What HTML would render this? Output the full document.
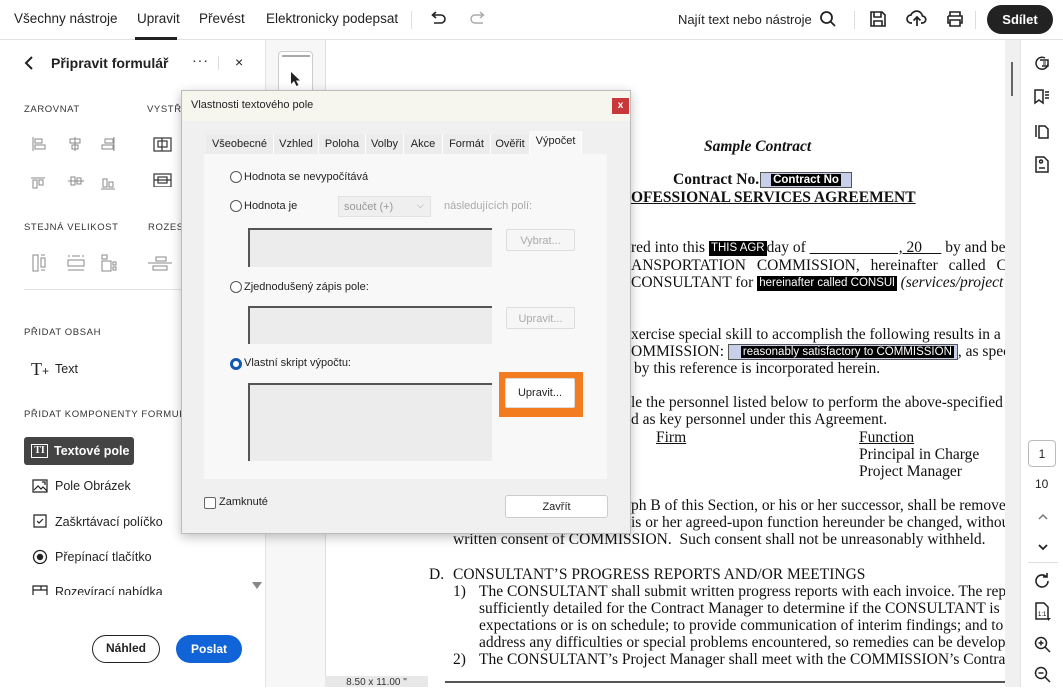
<!DOCTYPE html>
<html><head><meta charset="utf-8">
<style>
*{box-sizing:border-box;margin:0;padding:0}
body{width:1063px;height:687px;overflow:hidden;background:#fff;font-family:"Liberation Sans",sans-serif;position:relative;color:#222}
.a{position:absolute}
.top{left:0;top:0;width:1063px;height:40px;border-bottom:1px solid #e1e1e1;background:#fff}
.nav{font-size:13.5px;color:#222;top:11px}
.lbl{font-size:9.5px;letter-spacing:.6px;color:#333}
.ic{stroke:#888;fill:none;stroke-width:1}
.doc{font-family:"Liberation Serif",serif;font-size:15.5px;color:#111;white-space:nowrap;line-height:17px}
.fld{background:#000;color:#fff;font-family:"Liberation Sans",sans-serif;font-size:11.5px;padding:0 2px;display:inline-block;line-height:15px;vertical-align:1px}
.fldb{background:#c8cfe8;border:1px solid #555;display:inline-block;line-height:14px;font-family:"Liberation Sans",sans-serif;font-size:11.5px;vertical-align:1px}
.dlg{font-family:"Liberation Sans",sans-serif;font-size:11px;color:#222}
.tab{top:43px;height:20px;font-size:11px;padding-top:4px;text-align:center;background:#ececec;border-right:1px solid #fff}
.rad{width:12px;height:12px;border:1px solid #555;border-radius:50%;background:#fff}
.ta{background:#ececec;border-top:2px solid #555;border-left:2px solid #555}
.btn{background:#f6f6f6;border:1px solid #ddd;border-radius:2px;text-align:center;color:#aaa;font-size:11px;padding-top:5px}
</style></head><body>

<div class="a top"></div>
<div class="a nav" style="left:14px">Všechny nástroje</div>
<div class="a nav" style="left:137px">Upravit</div>
<div class="a" style="left:135px;top:37px;width:42px;height:3px;background:#222"></div>
<div class="a nav" style="left:199px">Převést</div>
<div class="a nav" style="left:266px">Elektronicky podepsat</div>
<div class="a" style="left:411px;top:11px;width:1px;height:18px;background:#ddd"></div>
<svg class="a" style="left:428px;top:10px" width="20" height="18"><path d="M5 5h8a4 4 0 0 1 0 8H6M8 2L4.5 5 8 8" stroke="#222" stroke-width="1.6" fill="none"/></svg>
<svg class="a" style="left:468px;top:10px" width="20" height="18"><path d="M15 5H7a4 4 0 0 0 0 8h8M12 2l3.5 3L12 8" stroke="#aaa" stroke-width="1.4" fill="none"/></svg>
<div class="a nav" style="left:678px;font-size:13px;top:12px">Najít text nebo nástroje</div>
<svg class="a" style="left:819px;top:10px" width="18" height="18"><circle cx="7.5" cy="7.5" r="5.5" stroke="#222" stroke-width="1.8" fill="none"/><path d="M11.5 11.5L16 16" stroke="#222" stroke-width="1.8"/></svg>
<div class="a" style="left:854px;top:11px;width:1px;height:18px;background:#ddd"></div>
<svg class="a" style="left:869px;top:10px" width="18" height="18"><path d="M2 2h11l3 3v11H2z M5 2v5h7V2 M5 16v-5h8v5" stroke="#222" stroke-width="1.6" fill="none"/></svg>
<svg class="a" style="left:906px;top:8px" width="22" height="20"><path d="M6 15H5a4 4 0 0 1 0-8 6 6 0 0 1 11.5 1A3.5 3.5 0 0 1 16 15h-1M11 18V9M7.5 12.5L11 9l3.5 3.5" stroke="#222" stroke-width="1.7" fill="none"/></svg>
<svg class="a" style="left:945px;top:10px" width="20" height="18"><path d="M5 6V2h10v4M3 6h14v7h-2M5 13H3V6M5 10h10v6H5z" stroke="#222" stroke-width="1.6" fill="none"/></svg>
<div class="a" style="left:975px;top:11px;width:1px;height:18px;background:#ddd"></div>
<div class="a" style="left:987px;top:5px;width:66px;height:29px;background:#222;border-radius:15px;color:#fff;font-weight:bold;font-size:13px;text-align:center;line-height:29px">Sdílet</div>

<div class="a" style="left:265px;top:40px;width:1px;height:647px;background:#e3e3e3"></div>
<svg class="a" style="left:22px;top:55px" width="14" height="16"><path d="M10 2L4 8l6 6" stroke="#222" stroke-width="2" fill="none"/></svg>
<div class="a" style="left:51px;top:55px;font-size:14px;font-weight:bold;color:#222">Připravit formulář</div>
<div class="a" style="left:192px;top:52px;font-size:14px;letter-spacing:1px">···</div>
<div class="a" style="left:218px;top:56px;width:1px;height:14px;background:#ddd"></div>
<div class="a" style="left:235px;top:54px;font-size:14px">×</div>
<div class="a lbl" style="left:24px;top:104px">ZAROVNAT</div>
<div class="a lbl" style="left:147px;top:104px">VYSTŘE</div>
<svg class="a" style="left:28px;top:135px" width="100" height="60"><g class="ic">
<path d="M5 2v14M7 4h7v4H7zM7 10h10v4H7z"/><path d="M47 2v14M42 4h10v4H42zM44 10h6v4h-6z"/><path d="M86 2v14M77 4h8v4h-8zM74 10h11v4H74z"/>
<path d="M3 43h14M5 45h4v8H5zM11 45h4v5h-4z"/><path d="M40 46h16M43 42h4v8h-4zM49 43h4v6h-4z"/><path d="M73 54h14M75 44h4v8h-4zM81 47h4v5h-4z"/></g></svg>
<svg class="a" style="left:153px;top:137px" width="22" height="50"><g stroke="#333" fill="none" stroke-width="1.2"><rect x="1" y="1" width="17" height="13"/><rect x="5" y="4" width="9" height="6"/><path d="M9 1v13"/><rect x="1" y="37" width="17" height="13"/><rect x="5" y="40" width="9" height="6"/><path d="M1 43h17"/></g></svg>
<div class="a lbl" style="left:24px;top:222px">STEJNÁ VELIKOST</div>
<div class="a lbl" style="left:148px;top:222px">ROZESI</div>
<svg class="a" style="left:30px;top:253px" width="150" height="22"><g class="ic"><path d="M3 2h5v16H3zM11 5h4v9h-4zM11 17h4M11 2h4"/><path d="M38 7h16v6H38zM42 3h8M38 17h16M38 3h2M52 3h2"/><path d="M72 2h5v4h-5zM72 8h9v10h-9zM83 9h3v3h-3zM83 14h3v3h-3z"/><path d="M126 4h10v4h-10zM123 13h14v4h-14zM118 10h24"/></g></svg>
<div class="a" style="left:24px;top:289px;width:240px;height:1px;background:#e3e3e3"></div>
<div class="a lbl" style="left:24px;top:327px">PŘIDAT OBSAH</div>
<div class="a" style="left:31px;top:359px;font-family:'Liberation Serif',serif;font-size:18px">T<span style="font-size:12px;font-family:'Liberation Sans'">+</span></div>
<div class="a" style="left:55px;top:362px;font-size:12.5px">Text</div>
<div class="a lbl" style="left:24px;top:409px">PŘIDAT KOMPONENTY FORMULÁ</div>
<div class="a" style="left:24px;top:437px;width:110px;height:28px;background:#444;border-radius:3px"></div>
<div class="a" style="left:31px;top:444px;width:17px;height:14px;border:1.5px solid #fff;color:#fff;font-size:10px;font-weight:bold;text-align:center;line-height:11px;font-family:'Liberation Serif',serif">TI</div>
<div class="a" style="left:54px;top:444px;color:#fff;font-weight:bold;font-size:12.5px">Textové pole</div>
<svg class="a" style="left:32px;top:479px" width="16" height="14"><path d="M1 1h14v12H1zM2 11l4-4 3 3 2-2 4 4M10 3h3v3" stroke="#222" fill="none" stroke-width="1.2"/></svg>
<div class="a" style="left:55px;top:479px;font-size:12.5px">Pole Obrázek</div>
<svg class="a" style="left:33px;top:514px" width="14" height="14"><path d="M1 1h12v12H1zM4 7l2 2 4-4" stroke="#222" fill="none" stroke-width="1.2"/></svg>
<div class="a" style="left:55px;top:515px;font-size:12.5px">Zaškrtávací políčko</div>
<svg class="a" style="left:32px;top:549px" width="16" height="16"><circle cx="8" cy="8" r="6.5" stroke="#222" fill="none" stroke-width="1.3"/><circle cx="8" cy="8" r="3.2" fill="#222"/></svg>
<div class="a" style="left:55px;top:550px;font-size:12.5px">Přepínací tlačítko</div>
<div class="a" style="left:30px;top:583px;width:230px;height:12px;overflow:hidden"><svg class="a" style="left:2px;top:2px" width="16" height="12"><path d="M1 1h14v10H1zM1 5h14M9 1v4" stroke="#222" fill="none" stroke-width="1.2"/></svg><div class="a" style="left:25px;top:2px;font-size:12.5px">Rozevírací nabídka</div></div>
<div class="a" style="left:252px;top:582px;width:0;height:0;border-left:5px solid transparent;border-right:5px solid transparent;border-top:7px solid #888"></div>
<div class="a" style="left:92px;top:635px;width:68px;height:28px;border:1.5px solid #222;border-radius:14px;text-align:center;line-height:25px;font-weight:bold;font-size:12px">Náhled</div>
<div class="a" style="left:176px;top:635px;width:66px;height:28px;background:#1164d8;border-radius:14px;text-align:center;line-height:28px;font-weight:bold;font-size:12px;color:#fff">Poslat</div>

<div class="a" style="left:266px;top:40px;width:59px;height:647px;background:#f7f7f7"></div>
<div class="a" style="left:278px;top:51px;width:35px;height:60px;background:#fff;border:1px solid #ccc;border-radius:4px"></div>
<div class="a" style="left:282px;top:55px;width:28px;height:2px;background:#aaa"></div>
<svg class="a" style="left:290px;top:71px" width="12" height="16"><path d="M1 1v12l3-3 2.5 5 2-1-2.5-4.5H10z" fill="#222"/></svg>

<div class="a" style="left:325px;top:40px;width:680px;height:636px;background:#fff;border-left:1px solid #ddd;overflow:hidden">
<div class="doc" style="position:absolute;left:0;top:0;width:680px;height:636px">
<div class="a" style="left:378px;top:98px;font-style:italic;font-weight:bold">Sample Contract</div>
<div class="a" style="left:347px;top:131px;font-weight:bold">Contract No.<span class="fldb" style="margin-left:1px"><span style="display:inline-block;width:10px"></span><span style="background:#000;color:#fff;padding:0 2px">Contract No</span><span style="display:inline-block;width:10px"></span></span></div>
<div class="a" style="left:305px;top:149px;font-weight:bold;text-decoration:underline">OFESSIONAL SERVICES AGREEMENT</div>
<div class="a" style="left:305px;top:199px">red into this <span class="fld">THIS AGR</span>day of <u>&nbsp;&nbsp;&nbsp;&nbsp;&nbsp;&nbsp;&nbsp;&nbsp;&nbsp;&nbsp;&nbsp;&nbsp;&nbsp;&nbsp;&nbsp;&nbsp;&nbsp;&nbsp;&nbsp;&nbsp;&nbsp;&nbsp;&nbsp;, 20&nbsp;&nbsp;&nbsp;&nbsp;&nbsp;</u> by and betw</div>
<div class="a" style="left:305px;top:217px;word-spacing:7px">ANSPORTATION COMMISSION, hereinafter called CON</div>
<div class="a" style="left:305px;top:234px">CONSULTANT for <span class="fld">hereinafter called CONSUl</span> <i>(services/project</i></div>
<div class="a" style="left:305px;top:286px">xercise special skill to accomplish the following results in a r</div>
<div class="a" style="left:305px;top:303px">OMMISSION: <span class="fldb" style="width:230px"><span style="display:inline-block;width:12px"></span><span style="background:#000;color:#fff;padding:0 2px">reasonably satisfactory to COMMISSION</span></span>, as spec</div>
<div class="a" style="left:308px;top:320px">by this reference is incorporated herein.</div>
<div class="a" style="left:305px;top:354px">le the personnel listed below to perform the above-specified</div>
<div class="a" style="left:305px;top:371px">d as key personnel under this Agreement.</div>
<div class="a" style="left:330px;top:389px;text-decoration:underline">Firm</div>
<div class="a" style="left:533px;top:389px;text-decoration:underline">Function</div>
<div class="a" style="left:533px;top:406px">Principal in Charge</div>
<div class="a" style="left:533px;top:423px">Project Manager</div>
<div class="a" style="left:305px;top:457px">ph B of this Section, or his or her successor, shall be remove</div>
<div class="a" style="left:305px;top:474px">is or her agreed-upon function hereunder be changed, withou</div>
<div class="a" style="left:127px;top:491px">written consent of COMMISSION.&nbsp; Such consent shall not be unreasonably withheld.</div>
<div class="a" style="left:103px;top:526px">D.</div>
<div class="a" style="left:127px;top:526px">CONSULTANT’S PROGRESS REPORTS AND/OR MEETINGS</div>
<div class="a" style="left:127px;top:543px">1)</div>
<div class="a" style="left:153px;top:543px">The CONSULTANT shall submit written progress reports with each invoice. The rep</div>
<div class="a" style="left:153px;top:560px">sufficiently detailed for the Contract Manager to determine if the CONSULTANT is</div>
<div class="a" style="left:153px;top:577px">expectations or is on schedule; to provide communication of interim findings; and to</div>
<div class="a" style="left:153px;top:594px">address any difficulties or special problems encountered, so remedies can be develop</div>
<div class="a" style="left:127px;top:611px">2)</div>
<div class="a" style="left:153px;top:611px">The CONSULTANT’s Project Manager shall meet with the COMMISSION’s Contra</div>
</div></div>
<div class="a" style="left:325px;top:676px;width:680px;height:11px;background:#fff"></div>
<div class="a" style="left:325px;top:676px;width:103px;height:11px;background:#e8e8e8;font-size:10px;color:#333;text-align:center;line-height:14px">8.50 x 11.00 "</div>
<div class="a" style="left:445px;top:681px;width:560px;height:1.5px;background:#555"></div>
<div class="a" style="left:1005px;top:40px;width:15px;height:647px;background:#f0f0f0"></div>
<div class="a" style="left:1011px;top:62px;width:2px;height:34px;background:#666"></div>
<div class="a" style="left:1020px;top:40px;width:43px;height:647px;background:#fff;border-left:1px solid #e3e3e3"></div>
<svg class="a" style="left:1033px;top:54px" width="18" height="18"><path d="M12 4a6 6 0 1 0 3 6M7 6h8v6H9" stroke="#222" fill="none" stroke-width="1.5"/><path d="M10 8h3M10 10h3" stroke="#222"/></svg>
<svg class="a" style="left:1033px;top:88px" width="18" height="18"><path d="M2 2h8v13l-4-3-4 3z M12 4h4M12 7h4M12 10h4" stroke="#222" fill="none" stroke-width="1.5"/></svg>
<svg class="a" style="left:1034px;top:122px" width="16" height="18"><path d="M2 3v12M5 4h6l3 3v9H5z" stroke="#222" fill="none" stroke-width="1.5"/></svg>
<svg class="a" style="left:1034px;top:156px" width="16" height="18"><path d="M2 1h8l4 4v11H2zM5 12h6M7 7a1.5 1.5 0 1 1 0.1 0" stroke="#222" fill="none" stroke-width="1.5"/></svg>
<div class="a" style="left:1028px;top:440px;width:28px;height:27px;border:1px solid #bbb;border-radius:4px;text-align:center;line-height:26px;font-size:12px">1</div>
<div class="a" style="left:1035px;top:477px;font-size:12px">10</div>
<svg class="a" style="left:1037px;top:512px" width="12" height="10"><path d="M2 7l4-4 4 4" stroke="#777" fill="none" stroke-width="1.5"/></svg>
<svg class="a" style="left:1037px;top:542px" width="12" height="10"><path d="M2 3l4 4 4-4" stroke="#222" fill="none" stroke-width="1.8"/></svg>
<div class="a" style="left:1028px;top:562px;width:30px;height:1px;background:#ddd"></div>
<svg class="a" style="left:1034px;top:572px" width="18" height="18"><path d="M14 9a6 6 0 1 1-2-4.5M13 1v4h-4" stroke="#222" fill="none" stroke-width="1.6"/></svg>
<svg class="a" style="left:1034px;top:602px" width="18" height="20"><path d="M2 1h8l4 4v12H2z" stroke="#222" fill="none" stroke-width="1.5"/><text x="4" y="14" font-size="6" font-family="Liberation Sans">1:1</text><path d="M14 16l3 0-3 3z" fill="#222"/></svg>
<svg class="a" style="left:1034px;top:636px" width="18" height="18"><circle cx="7" cy="7" r="5.5" stroke="#222" fill="none" stroke-width="1.5"/><path d="M11 11l5 5M4.5 7h5M7 4.5v5" stroke="#222" stroke-width="1.5"/></svg>
<svg class="a" style="left:1034px;top:666px" width="18" height="18"><circle cx="7" cy="7" r="5.5" stroke="#222" fill="none" stroke-width="1.5"/><path d="M11 11l5 5M4.5 7h5" stroke="#222" stroke-width="1.5"/></svg>

<div class="a dlg" style="left:181px;top:90px;width:450px;height:444px;background:#f0f0f0;border:1px solid #bbb;box-shadow:0 3px 10px rgba(0,0,0,.25)">
<div class="a" style="left:0;top:0;width:448px;height:30px;background:#f7f6ee"></div>
<div class="a" style="left:9px;top:8px;font-size:11px">Vlastnosti textového pole</div>
<div class="a" style="left:430px;top:7px;width:17px;height:16px;background:#c8383b;color:#fff;font-size:10px;text-align:center;line-height:15px;font-weight:bold">x</div>
<div class="a" style="left:22px;top:63px;width:403px;height:325px;background:#f8f8f8"></div>
<div class="a tab" style="left:24px;width:68px">Všeobecné</div>
<div class="a tab" style="left:92px;width:45px">Vzhled</div>
<div class="a tab" style="left:137px;width:47px">Poloha</div>
<div class="a tab" style="left:184px;width:38px">Volby</div>
<div class="a tab" style="left:222px;width:39px">Akce</div>
<div class="a tab" style="left:261px;width:48px">Formát</div>
<div class="a tab" style="left:309px;width:39px">Ověřit</div>
<div class="a tab" style="left:348px;top:40px;width:52px;height:23px;background:#f8f8f8;padding-top:4px">Výpočet</div>
<div class="a rad" style="left:48px;top:80px"></div><div class="a" style="left:62px;top:80px">Hodnota se nevypočítává</div>
<div class="a rad" style="left:48px;top:109px"></div><div class="a" style="left:62px;top:109px">Hodnota je</div>
<div class="a" style="left:156px;top:105px;width:93px;height:21px;background:#efefef;border:1px solid #e2e2e2;color:#999;padding:4px 0 0 5px">součet (+)<span style="position:absolute;left:78px;top:3px;font-size:9px">⌵</span></div>
<div class="a" style="left:262px;top:109px;color:#aaa">následujících polí:</div>
<div class="a ta" style="left:66px;top:137px;width:244px;height:39px"></div>
<div class="a btn" style="left:324px;top:138px;width:69px;height:22px">Vybrat...</div>
<div class="a rad" style="left:48px;top:190px"></div><div class="a" style="left:62px;top:190px">Zjednodušený zápis pole:</div>
<div class="a ta" style="left:66px;top:215px;width:244px;height:38px"></div>
<div class="a btn" style="left:324px;top:216px;width:69px;height:22px">Upravit...</div>
<div class="a rad" style="left:48px;top:267px;border:3.5px solid #1558b0"></div><div class="a" style="left:62px;top:266px">Vlastní skript výpočtu:</div>
<div class="a ta" style="left:66px;top:292px;width:244px;height:78px"></div>
<div class="a" style="left:317px;top:281px;width:84px;height:45px;background:#f47c20"></div>
<div class="a btn" style="left:323px;top:287px;width:70px;height:30px;background:#fff;color:#222;padding-top:8px">Upravit...</div>
<div class="a" style="left:22px;top:406px;width:12px;height:12px;border:1px solid #666;border-radius:2px;background:#fff"></div>
<div class="a" style="left:37px;top:405px">Zamknuté</div>
<div class="a" style="left:323px;top:404px;width:103px;height:23px;background:#fff;border:1px solid #ccc;border-radius:3px;text-align:center;padding-top:5px">Zavřít</div>
</div>
</body></html>
